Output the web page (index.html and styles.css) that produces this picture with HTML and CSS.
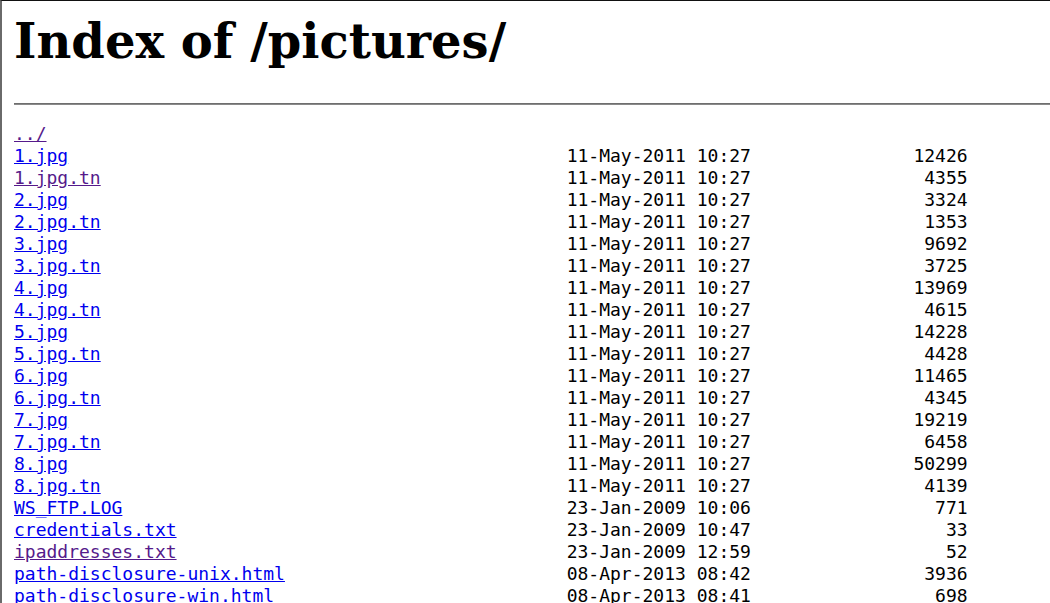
FILE: index.html
```html
<!DOCTYPE html>
<html>
<head>
<meta charset="utf-8">
<title>Index of /pictures/</title>
<link rel="stylesheet" href="styles.css">
</head>
<body>
<div class="frame">
<h1 class="title">Index of /pictures/</h1>
<hr class="rule">
<div class="listing">
<div class="row"><a class="v" href="#">../</a></div>
<div class="row"><a href="#">1.jpg</a><span>11-May-2011 10:27</span><span class="size">12426</span></div>
<div class="row"><a class="v" href="#">1.jpg.tn</a><span>11-May-2011 10:27</span><span class="size">4355</span></div>
<div class="row"><a href="#">2.jpg</a><span>11-May-2011 10:27</span><span class="size">3324</span></div>
<div class="row"><a href="#">2.jpg.tn</a><span>11-May-2011 10:27</span><span class="size">1353</span></div>
<div class="row"><a href="#">3.jpg</a><span>11-May-2011 10:27</span><span class="size">9692</span></div>
<div class="row"><a href="#">3.jpg.tn</a><span>11-May-2011 10:27</span><span class="size">3725</span></div>
<div class="row"><a href="#">4.jpg</a><span>11-May-2011 10:27</span><span class="size">13969</span></div>
<div class="row"><a href="#">4.jpg.tn</a><span>11-May-2011 10:27</span><span class="size">4615</span></div>
<div class="row"><a href="#">5.jpg</a><span>11-May-2011 10:27</span><span class="size">14228</span></div>
<div class="row"><a href="#">5.jpg.tn</a><span>11-May-2011 10:27</span><span class="size">4428</span></div>
<div class="row"><a href="#">6.jpg</a><span>11-May-2011 10:27</span><span class="size">11465</span></div>
<div class="row"><a href="#">6.jpg.tn</a><span>11-May-2011 10:27</span><span class="size">4345</span></div>
<div class="row"><a href="#">7.jpg</a><span>11-May-2011 10:27</span><span class="size">19219</span></div>
<div class="row"><a href="#">7.jpg.tn</a><span>11-May-2011 10:27</span><span class="size">6458</span></div>
<div class="row"><a href="#">8.jpg</a><span>11-May-2011 10:27</span><span class="size">50299</span></div>
<div class="row"><a href="#">8.jpg.tn</a><span>11-May-2011 10:27</span><span class="size">4139</span></div>
<div class="row"><a href="#">WS_FTP.LOG</a><span>23-Jan-2009 10:06</span><span class="size">771</span></div>
<div class="row"><a href="#">credentials.txt</a><span>23-Jan-2009 10:47</span><span class="size">33</span></div>
<div class="row"><a class="v" href="#">ipaddresses.txt</a><span>23-Jan-2009 12:59</span><span class="size">52</span></div>
<div class="row"><a href="#">path-disclosure-unix.html</a><span>08-Apr-2013 08:42</span><span class="size">3936</span></div>
<div class="row"><a href="#">path-disclosure-win.html</a><span>08-Apr-2013 08:41</span><span class="size">698</span></div>
</div>
</div>
</body>
</html>
```
FILE: styles.css
```css
html, body {
  margin: 0;
  padding: 0;
  background: #ffffff;
}

.frame {
  min-height: 100vh;
  box-sizing: border-box;
  border-left: 2px solid #6a6a6a;
  border-top: 1px solid #111111;
  padding-left: 12px;
  display: flow-root;
}

.title {
  font-family: "DejaVu Serif", serif;
  font-weight: bold;
  font-size: 48px;
  line-height: 60px;
  margin: 10px 0 32px 0;
  color: #000;
}

.rule {
  margin: 0;
  height: 0;
  border: 0;
  border-top: 1px solid #6e6e6e;
  border-bottom: 1px solid #8a8a8a;
}

.listing {
  margin-top: 18px;
  font-family: "DejaVu Sans Mono", monospace;
  font-size: 18px;
  line-height: 22px;
  color: #000;
}

.row {
  display: grid;
  grid-template-columns: 51ch 17ch 20ch;
  white-space: pre;
}

.row a {
  color: #0000ee;
  text-decoration: underline;
  justify-self: start;
}

.row a.v {
  color: #551a8b;
}

.size {
  text-align: right;
}
```
